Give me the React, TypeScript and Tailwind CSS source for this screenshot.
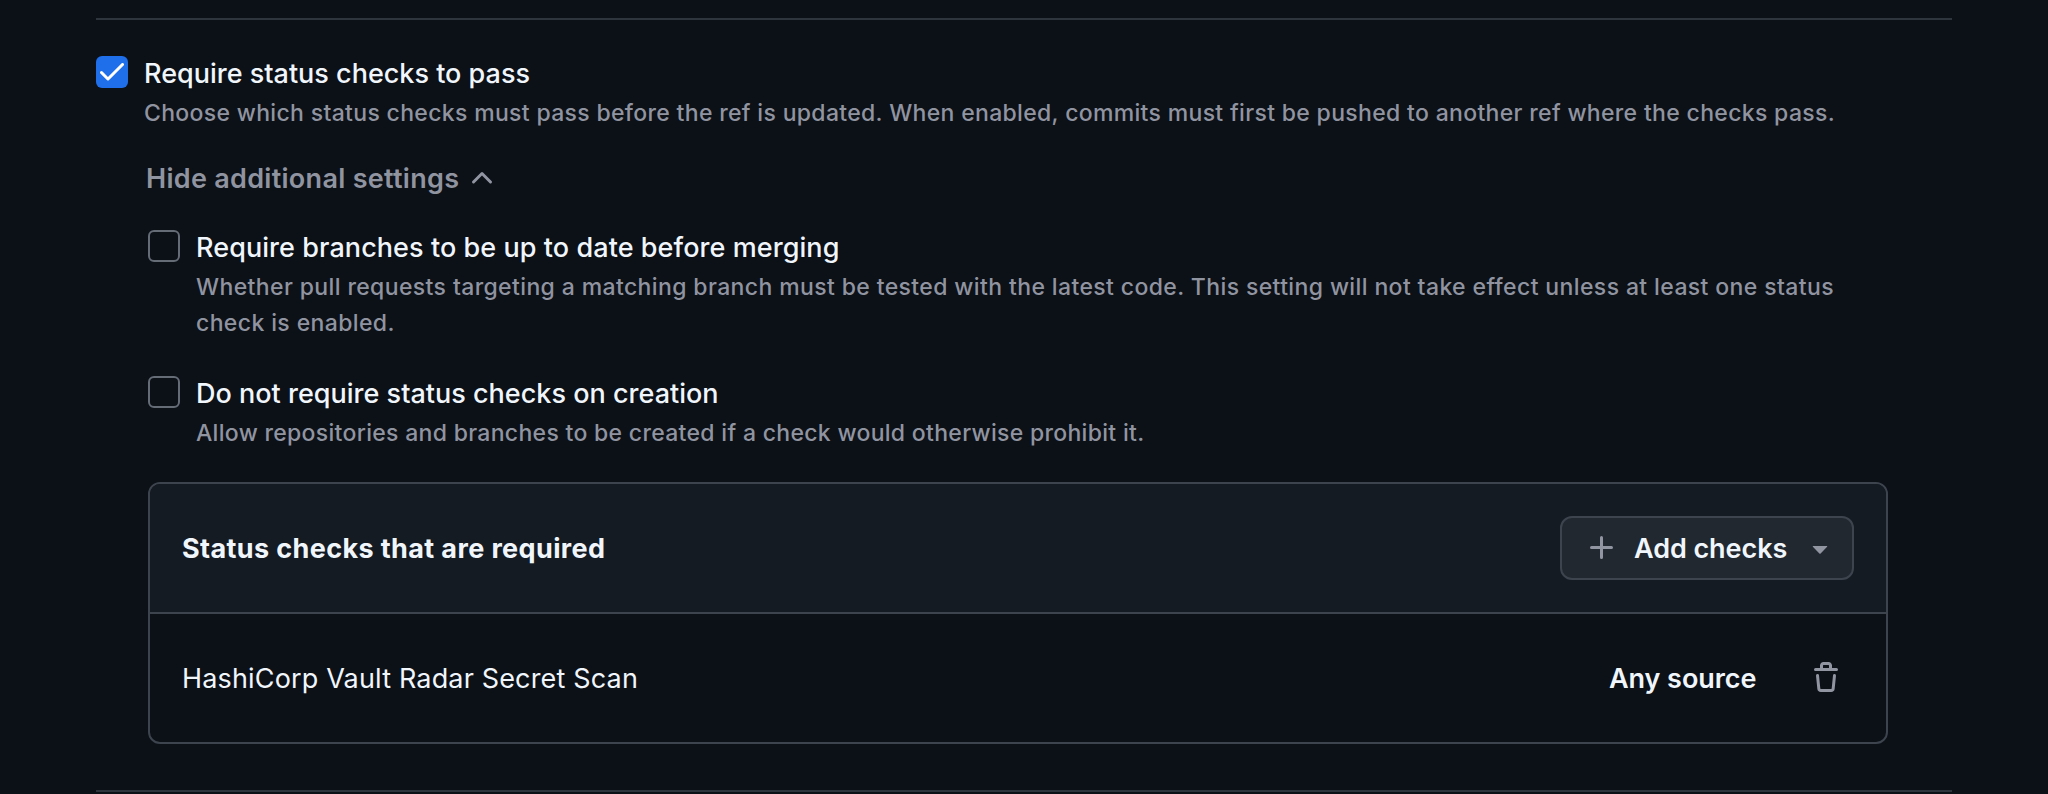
import { useState } from "react";

const CheckMark = () => (
  <svg width="24" height="18" viewBox="0 0 12 9" fill="#ffffff" className="shrink-0">
    <path d="M11.78.22a.749.749 0 0 1 0 1.061L4.52 8.541a.749.749 0 0 1-1.062 0L.202 5.285a.75.75 0 0 1 .02-1.042.75.75 0 0 1 1.042-.018l2.725 2.725L10.718.22a.749.749 0 0 1 1.062 0Z" />
  </svg>
);

const iconPaths = {
  chevronUp:
    "M3.22 10.53a.749.749 0 0 1 0-1.06l4.25-4.25a.749.749 0 0 1 1.06 0l4.25 4.25a.749.749 0 1 1-1.06 1.06L8 6.811 4.28 10.53a.749.749 0 0 1-1.06 0Z",
  plus: "M7.75 2a.75.75 0 0 1 .75.75V7h4.25a.75.75 0 0 1 0 1.5H8.5v4.25a.75.75 0 0 1-1.5 0V8.5H2.75a.75.75 0 0 1 0-1.5H7V2.75A.75.75 0 0 1 7.75 2Z",
  triangleDown:
    "m4.427 7.427 3.396 3.396a.25.25 0 0 0 .354 0l3.396-3.396A.25.25 0 0 0 11.396 7H4.604a.25.25 0 0 0-.177.427Z",
  trash:
    "M11 1.75V3h2.25a.75.75 0 0 1 0 1.5H2.75a.75.75 0 0 1 0-1.5H5V1.75C5 .784 5.784 0 6.75 0h2.5C10.216 0 11 .784 11 1.75ZM4.496 6.675l.66 6.6a.25.25 0 0 0 .249.225h5.19a.25.25 0 0 0 .249-.225l.66-6.6a.75.75 0 0 1 1.492.149l-.66 6.6A1.748 1.748 0 0 1 10.595 15h-5.19a1.75 1.75 0 0 1-1.741-1.575l-.66-6.6a.75.75 0 1 1 1.492-.15ZM6.5 1.75V3h3V1.75a.25.25 0 0 0-.25-.25h-2.5a.25.25 0 0 0-.25.25Z",
};

const Icon = ({ name }: { name: keyof typeof iconPaths }) => (
  <svg width="32" height="32" viewBox="0 0 16 16" fill="#9195a1" className="shrink-0">
    <path d={iconPaths[name]} />
  </svg>
);

type OptionProps = {
  title: string;
  lines: string[];
  defaultChecked?: boolean;
  titleClass: string;
  textClass: string;
};

function Option({ title, lines, defaultChecked = false, titleClass, textClass }: OptionProps) {
  const [checked, setChecked] = useState(defaultChecked);
  return (
    <div className="flex items-start gap-4">
      <button
        type="button"
        role="checkbox"
        aria-checked={checked}
        aria-label={title}
        onClick={() => setChecked(!checked)}
        className={
          checked
            ? "mt-1 flex size-8 shrink-0 items-center justify-center rounded-[6px] bg-[#1f6feb]"
            : "mt-1 flex size-8 shrink-0 items-center justify-center rounded-[6px] border-2 border-[#656c76]"
        }
      >
        {checked && <CheckMark />}
      </button>
      <div className={textClass}>
        <div className={`pt-px text-[27px] leading-[42px] font-medium text-[#f0f6fc] ${titleClass}`}>{title}</div>
        <div className="text-[23px] leading-9 font-medium text-[#9094a0]">
          {lines.map((line) => (
            <div key={line}>{line}</div>
          ))}
        </div>
      </div>
    </div>
  );
}

export default function App() {
  return (
    <main className="flex h-[794px] w-[2048px] flex-col overflow-hidden bg-[#0c1017] px-24 pt-[18px] font-['Inter',sans-serif] whitespace-nowrap">
      <section className="flex h-[774px] w-[1856px] flex-col border-y-2 border-[#2f353d] pt-8">
        <Option
          defaultChecked
          title="Require status checks to pass"
          titleClass="tracking-[0px]"
          textClass="tracking-[0.328px]"
          lines={[
            "Choose which status checks must pass before the ref is updated. When enabled, commits must first be pushed to another ref where the checks pass.",
          ]}
        />

        <div className="mt-[26px] ml-[50px] flex h-[42px] items-center gap-[7px] text-[27px] leading-[42px] font-semibold tracking-[0.29px] text-[#9094a0]">
          <span className="w-[313px] pt-0.5">Hide additional settings</span>
          <Icon name="chevronUp" />
        </div>

        <div className="mt-[27px] ml-[52px] flex w-[1740px] flex-col">
          <Option
            title="Require branches to be up to date before merging"
            titleClass="tracking-[0.07px]"
            textClass="tracking-[0.382px]"
            lines={[
              "Whether pull requests targeting a matching branch must be tested with the latest code. This setting will not take effect unless at least one status",
              "check is enabled.",
            ]}
          />
          <div className="mt-[31px]">
            <Option
              title="Do not require status checks on creation"
              titleClass="tracking-[0.01px]"
              textClass="tracking-[0.308px]"
              lines={["Allow repositories and branches to be created if a check would otherwise prohibit it."]}
            />
          </div>

          <div className="mt-[31px] overflow-hidden rounded-xl border-2 border-[#3d444d] text-[27px] text-[#f0f6fc]">
            <div className="flex h-[130px] items-center justify-between border-b-2 border-[#3d444d] bg-[#151b23] px-8">
              <h3 className="pt-0.5 font-bold tracking-[0.38px]">Status checks that are required</h3>
              <button
                type="button"
                className="flex h-16 w-[294px] items-center rounded-xl border-2 border-[#3d444d] bg-[#212830] pl-6 font-semibold tracking-[-0.07px]"
              >
                <Icon name="plus" />
                <span className="ml-4 w-[153px] pt-0.5 text-left">Add checks</span>
                <span className="ml-[17px]">
                  <Icon name="triangleDown" />
                </span>
              </button>
            </div>
            <div className="flex h-32 items-center justify-between pr-11 pl-8">
              <span className="pt-0.5 tracking-[0.16px]">HashiCorp Vault Radar Secret Scan</span>
              <div className="flex items-center">
                <span className="w-[201px] pt-0.5 font-semibold tracking-[-0.07px]">Any source</span>
                <button type="button" aria-label="Remove check">
                  <Icon name="trash" />
                </button>
              </div>
            </div>
          </div>
        </div>
      </section>
    </main>
  );
}
